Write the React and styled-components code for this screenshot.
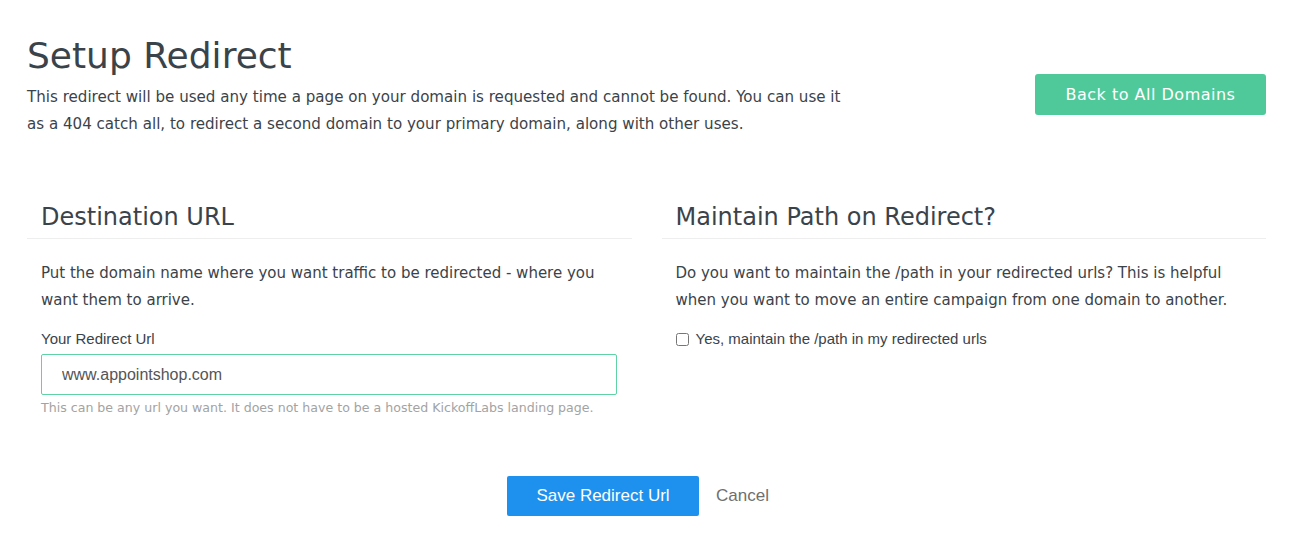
import styled, { createGlobalStyle } from 'styled-components';
import { useState } from 'react';

const GlobalStyle = createGlobalStyle`
  html, body {
    margin: 0;
    padding: 0;
    background: #fff;
  }
  body {
    font-family: "DejaVu Sans", Verdana, sans-serif;
    color: #3b434a;
  }
`;

function App() {
  const [url, setUrl] = useState('www.appointshop.com');
  const [keepPath, setKeepPath] = useState(false);

  return (
    <Page>
      <GlobalStyle />
      <Header>
        <HeaderText>
          <Title>Setup Redirect</Title>
          <Lead>
            This redirect will be used any time a page on your domain is requested and cannot be found. You can use it
            as a 404 catch all, to redirect a second domain to your primary domain, along with other uses.
          </Lead>
        </HeaderText>
        <BackButton type="button">Back to All Domains</BackButton>
      </Header>

      <Columns>
        <Panel>
          <PanelTitle>Destination URL</PanelTitle>
          <PanelBody>
            <Text>
              Put the domain name where you want traffic to be redirected - where you want them to arrive.
            </Text>
            <Label htmlFor="redirect-url">Your Redirect Url</Label>
            <UrlInput id="redirect-url" value={url} onChange={(e) => setUrl(e.target.value)} />
            <Help>This can be any url you want. It does not have to be a hosted KickoffLabs landing page.</Help>
          </PanelBody>
        </Panel>
        <Panel>
          <PanelTitle>Maintain Path on Redirect?</PanelTitle>
          <PanelBody>
            <Text>
              Do you want to maintain the /path in your redirected urls? This is helpful when you want to move an
              entire campaign from one domain to another.
            </Text>
            <CheckRow>
              <Check type="checkbox" checked={keepPath} onChange={(e) => setKeepPath(e.target.checked)} />
              Yes, maintain the /path in my redirected urls
            </CheckRow>
          </PanelBody>
        </Panel>
      </Columns>

      <Actions>
        <SaveButton type="button">Save Redirect Url</SaveButton>
        <CancelLink href="#">Cancel</CancelLink>
      </Actions>
    </Page>
  );
}

const Page = styled.div`
  padding: 32px 27px 40px 26px;
`;

const Header = styled.div`
  display: flex;
  justify-content: space-between;
  align-items: flex-start;
`;

const HeaderText = styled.div`
  width: 830px;
  padding-left: 1px;
`;

const Title = styled.h1`
  margin: 0;
  font-size: 36px;
  font-weight: 400;
  line-height: 48px;
  color: #3b434a;
`;

const Lead = styled.p`
  margin: 4px 0 0;
  font-size: 15.1px;
  line-height: 27px;
  color: #3b434a;
`;

const BackButton = styled.button`
  margin-top: 42px;
  width: 231px;
  height: 41px;
  border: none;
  border-radius: 3px;
  background: #50c99a;
  color: #fff;
  font-family: "DejaVu Sans", Verdana, sans-serif;
  font-size: 16px;
  letter-spacing: 0.5px;
  cursor: pointer;
`;

const Columns = styled.div`
  display: grid;
  grid-template-columns: 1fr 1fr;
  column-gap: 30px;
  margin-top: 61px;
  padding-left: 1px;
`;

const Panel = styled.section``;

const PanelTitle = styled.h2`
  margin: 0;
  padding: 0 15px 3px 14px;
  font-size: 24px;
  font-weight: 400;
  line-height: 36px;
  color: #3b434a;
  border-bottom: 1px solid #eeeeee;
`;

const PanelBody = styled.div`
  padding: 21px 15px 0 14px;
`;

const Text = styled.p`
  margin: 0 0 15px;
  font-size: 15px;
  line-height: 27px;
  color: #3b434a;
`;

const Label = styled.label`
  display: block;
  margin-bottom: 5px;
  font-family: "Liberation Sans", Arial, sans-serif;
  font-size: 15px;
  line-height: 20px;
  color: #3b434a;
`;

const UrlInput = styled.input`
  display: block;
  box-sizing: border-box;
  width: 100%;
  height: 41px;
  padding: 0 20px;
  border: 1px solid #5fd3a5;
  border-radius: 2px;
  font-family: "Liberation Sans", Arial, sans-serif;
  font-size: 16px;
  color: #555;
  outline: none;
`;

const Help = styled.p`
  margin: 4px 0 0;
  font-size: 12.6px;
  line-height: 18px;
  color: #a3a3a3;
`;

const CheckRow = styled.label`
  display: flex;
  align-items: center;
  gap: 7px;
  font-family: "Liberation Sans", Arial, sans-serif;
  font-size: 15px;
  line-height: 20px;
  color: #3b434a;
`;

const Check = styled.input`
  margin: 0;
  width: 13px;
  height: 13px;
`;

const Actions = styled.div`
  display: flex;
  justify-content: center;
  align-items: center;
  gap: 17px;
  margin-top: 59px;
  padding-right: 16px;
`;

const SaveButton = styled.button`
  width: 192px;
  height: 40px;
  border: none;
  border-radius: 2px;
  background: #1e90ee;
  color: #fff;
  font-family: "Liberation Sans", Arial, sans-serif;
  font-size: 17px;
  cursor: pointer;
`;

const CancelLink = styled.a`
  font-family: "Liberation Sans", Arial, sans-serif;
  font-size: 17px;
  color: #6f6f6f;
  text-decoration: none;
`;

export default App;
